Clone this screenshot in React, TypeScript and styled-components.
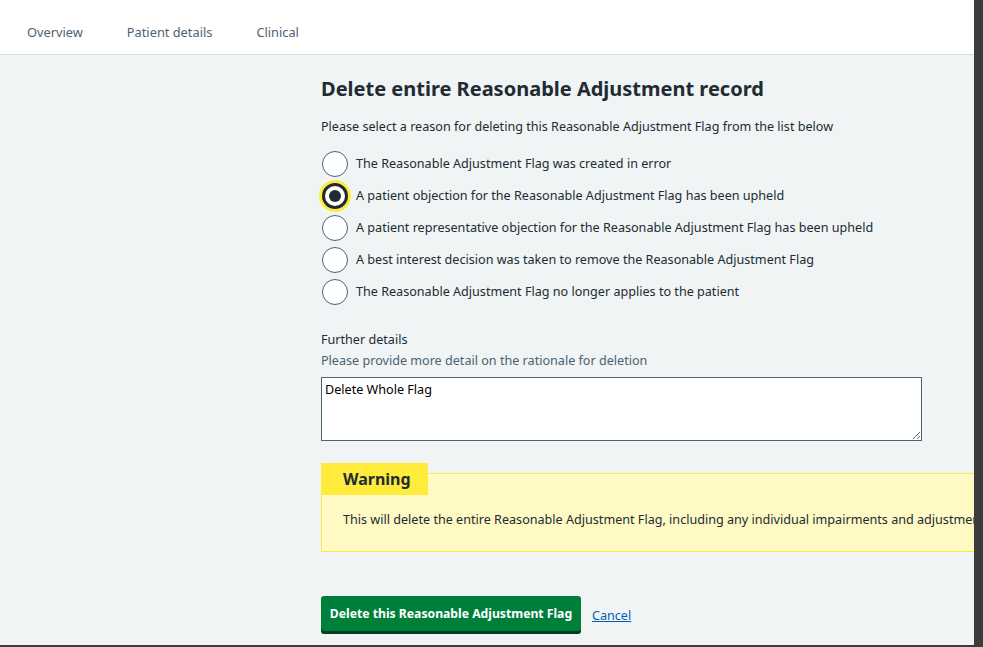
import React from "react";
import styled, { createGlobalStyle } from "styled-components";

const Global = createGlobalStyle`
  html, body { margin: 0; padding: 0; background: #3c3c3c; }
  body { font-family: "Noto Sans", "Open Sans", Arial, sans-serif; color: #212b32; }
  * { box-sizing: border-box; }
`;

const Frame = styled.div`
  width: 974px;
  height: 645px;
  overflow: hidden;
  background: #f0f4f5;
  display: flex;
  flex-direction: column;
`;

const Header = styled.nav`
  height: 55px;
  flex: none;
  background: #ffffff;
  border-bottom: 1px solid #d8dde0;
  display: flex;
  align-items: flex-start;
  padding: 23px 0 0 27px;
  gap: 44px;
`;

const Tab = styled.a`
  font-size: 12.8px;
  line-height: 18px;
  color: #4c6272;
  text-decoration: none;
`;

const Main = styled.main`
  display: grid;
  grid-template-columns: 321px 1fr;
`;

const Content = styled.div`
  grid-column: 2;
  padding-top: 22px;
  width: 700px;
`;

const Title = styled.h1`
  margin: 0;
  font-size: 20px;
  line-height: 24px;
  font-weight: 700;
  color: #212b32;
`;

const Intro = styled.p`
  margin: 17px 0 0;
  font-size: 12.6px;
  line-height: 18px;
`;

const RadioList = styled.div`
  margin-top: 15px;
  display: flex;
  flex-direction: column;
  gap: 6px;
`;

const RadioRow = styled.label`
  display: flex;
  align-items: center;
  gap: 8px;
  height: 26px;
  font-size: 12.6px;
  line-height: 18px;
`;

const RadioCircle = styled.span<{ $checked?: boolean }>`
  width: 26px;
  height: 26px;
  border-radius: 50%;
  background: #fff;
  flex: none;
  margin-left: 1px;
  border: ${(p) => (p.$checked ? "3px solid #212b32" : "1.5px solid #4c6272")};
  box-shadow: ${(p) => (p.$checked ? "0 0 0 3px #ffeb3b" : "none")};
  display: flex;
  align-items: center;
  justify-content: center;
  &::after {
    content: "";
    display: ${(p) => (p.$checked ? "block" : "none")};
    width: 12px;
    height: 12px;
    border-radius: 50%;
    background: #212b32;
  }
`;

const FieldLabel = styled.div`
  margin-top: 26px;
  font-size: 12.6px;
  line-height: 18px;
`;

const Hint = styled.div`
  margin-top: 3px;
  font-size: 12.6px;
  line-height: 18px;
  color: #4c6272;
`;

const TextArea = styled.textarea`
  display: block;
  margin-top: 7px;
  width: 601px;
  height: 64px;
  border: 1px solid #4c6272;
  background: #fff;
  padding: 3px 3px;
  font-family: "Noto Sans", "Open Sans", Arial, sans-serif;
  font-size: 12.6px;
  line-height: 18px;
  color: #000;
  resize: vertical;
`;

const Warning = styled.section`
  position: relative;
  margin-top: 32px;
  width: 700px;
  height: 79px;
  background: #fff9c4;
  border: 1px solid #ffeb3b;
  padding: 37px 21px 0;
`;

const WarningLabel = styled.h3`
  position: absolute;
  top: -11px;
  left: -1px;
  margin: 0;
  width: 107px;
  height: 32px;
  background: #ffeb3b;
  font-size: 16px;
  font-weight: 700;
  line-height: 32px;
  padding-left: 22px;
  color: #212b32;
`;

const WarningText = styled.p`
  margin: 0;
  font-size: 12.6px;
  line-height: 18px;
  white-space: nowrap;
`;

const Actions = styled.div`
  margin-top: 44px;
  display: flex;
  align-items: center;
  gap: 11px;
`;

const Button = styled.button`
  height: 35px;
  width: 260px;
  padding: 0;
  background: #007f3b;
  border: none;
  border-radius: 3px;
  box-shadow: 0 3px 0 #00401e;
  color: #fff;
  font-family: "Noto Sans", "Open Sans", Arial, sans-serif;
  font-size: 12.2px;
  font-weight: 700;
  white-space: nowrap;
  margin-bottom: 3px;
`;

const CancelLink = styled.a`
  font-size: 12.6px;
  color: #005eb8;
  text-decoration: underline;
`;

const reasons = [
  "The Reasonable Adjustment Flag was created in error",
  "A patient objection for the Reasonable Adjustment Flag has been upheld",
  "A patient representative objection for the Reasonable Adjustment Flag has been upheld",
  "A best interest decision was taken to remove the Reasonable Adjustment Flag",
  "The Reasonable Adjustment Flag no longer applies to the patient",
];

export default function App() {
  return (
    <>
      <Global />
      <Frame>
        <Header>
          <Tab>Overview</Tab>
          <Tab>Patient details</Tab>
          <Tab>Clinical</Tab>
        </Header>
        <Main>
          <Content>
            <Title>Delete entire Reasonable Adjustment record</Title>
            <Intro>Please select a reason for deleting this Reasonable Adjustment Flag from the list below</Intro>
            <RadioList>
              {reasons.map((r, i) => (
                <RadioRow key={r}>
                  <RadioCircle $checked={i === 1} />
                  {r}
                </RadioRow>
              ))}
            </RadioList>
            <FieldLabel>Further details</FieldLabel>
            <Hint>Please provide more detail on the rationale for deletion</Hint>
            <TextArea defaultValue="Delete Whole Flag" />
            <Warning>
              <WarningLabel>Warning</WarningLabel>
              <WarningText>
                This will delete the entire Reasonable Adjustment Flag, including any individual impairments and adjustments
              </WarningText>
            </Warning>
            <Actions>
              <Button>Delete this Reasonable Adjustment Flag</Button>
              <CancelLink href="#">Cancel</CancelLink>
            </Actions>
          </Content>
        </Main>
      </Frame>
    </>
  );
}
